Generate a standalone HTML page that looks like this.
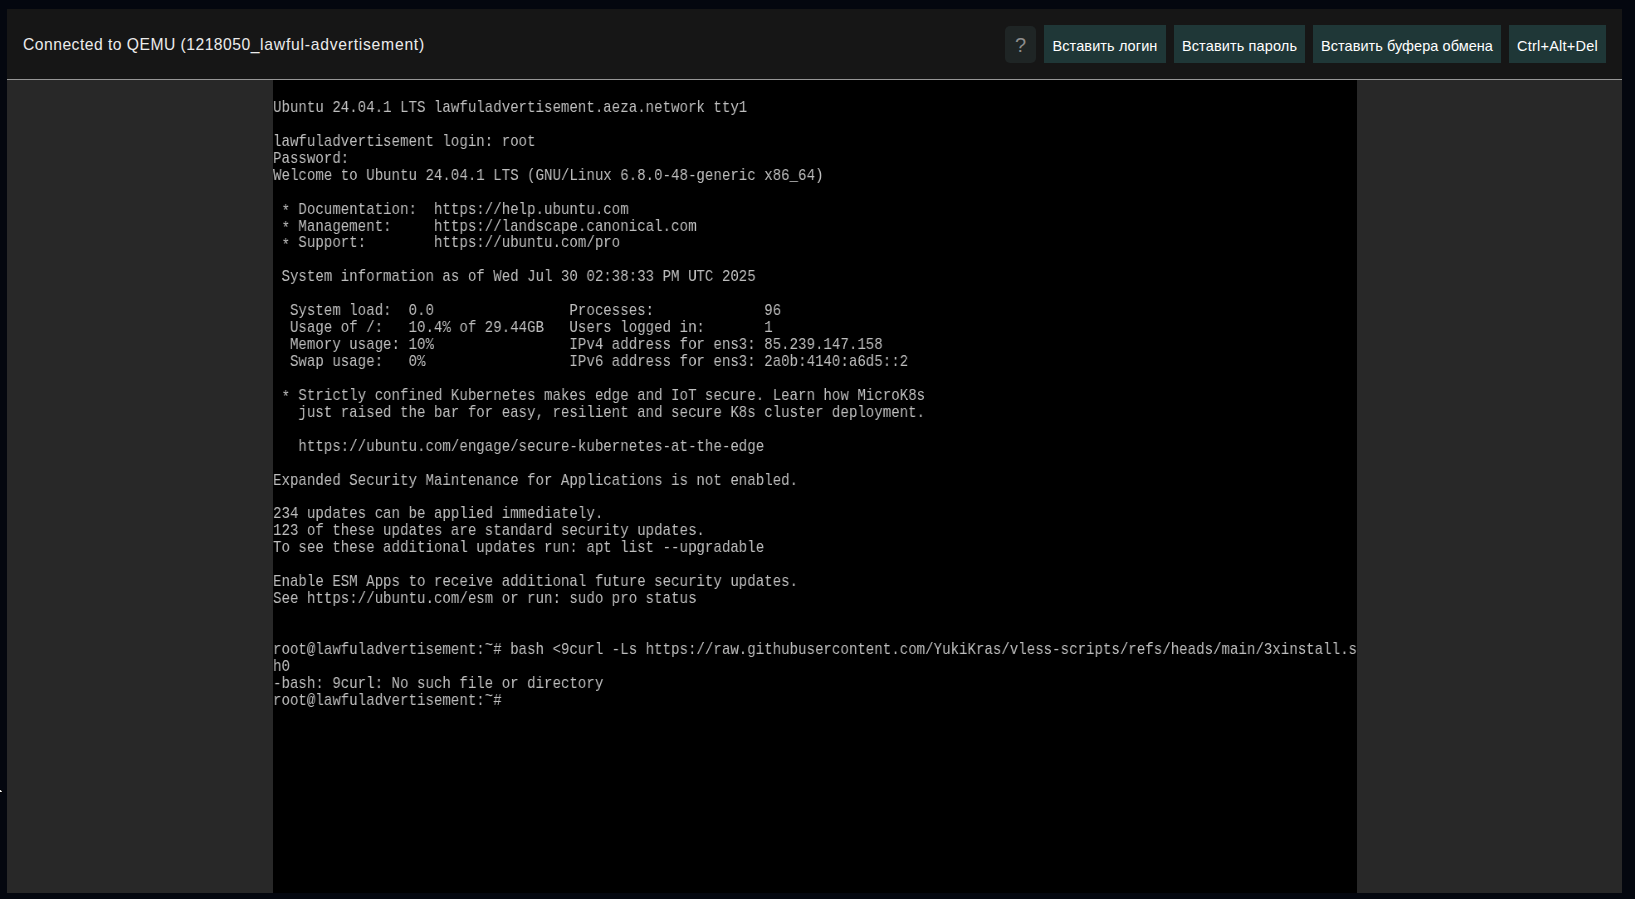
<!DOCTYPE html>
<html lang="ru">
<head>
<meta charset="utf-8">
<title>noVNC - QEMU (1218050_lawful-advertisement)</title>
<style>
  html, body {
    margin: 0;
    padding: 0;
    width: 1635px;
    height: 899px;
    overflow: hidden;
    background: #04070f;
    font-family: "Liberation Sans", sans-serif;
  }
  #frame {
    position: absolute;
    left: 7px;
    top: 9px;
    width: 1615px;
    height: 884px;
    background: #282828;
    overflow: hidden;
  }
  #topbar {
    position: absolute;
    left: 0;
    top: 0;
    width: 1615px;
    height: 70px;
    background: #161616;
    border-bottom: 1px solid #969696;
  }
  #status {
    position: absolute;
    left: 16px;
    top: 26px;
    height: 20px;
    line-height: 20px;
    font-size: 15.7px;
    letter-spacing: 0.6px;
    color: #ececec;
    white-space: nowrap;
  }
  .btn {
    position: absolute;
    top: 16px;
    height: 38px;
    line-height: 38px;
    background: #1f3737;
    color: #ffffff;
    font-size: 14.5px;
    text-align: center;
    white-space: nowrap;
    box-sizing: border-box;
    padding-top: 2px;
  }
  #help {
    position: absolute;
    left: 998px;
    top: 17px;
    width: 31px;
    height: 37px;
    line-height: 38px;
    border-radius: 5px;
    background: #1f2525;
    color: #8d8d8d;
    font-size: 20px;
    text-align: center;
  }
  #screen {
    position: absolute;
    left: 266px;
    top: 71px;
    width: 1084px;
    height: 813px;
    background: #000000;
    overflow: hidden;
  }
  #tty {
    position: absolute;
    left: 0;
    top: 2.7px;
    margin: 0;
    font-family: "Liberation Mono", monospace;
    font-size: 17px;
    line-height: 16.9375px;
    color: #bebebe;
    white-space: pre;
    transform-origin: 0 0;
    transform: scaleX(0.83014);
    will-change: transform;
  }
  #cursor-tip {
    position: absolute;
    left: 0;
    top: 786px;
    width: 6px;
    height: 10px;
  }
  #tty .as { position: relative; top: 2.5px; }
  #tty .ti { position: relative; top: -3.5px; }
</style>
</head>
<body>
<div id="frame">
  <div id="topbar">
    <div id="status"><span style="letter-spacing:0.47px">Connected to QEMU (1218050</span><span style="letter-spacing:0.75px">_lawful-advertisement)</span></div>
    <div id="help">?</div>
    <div class="btn" style="left:1037px;width:122px;letter-spacing:0.10px;">Вставить логин</div>
    <div class="btn" style="left:1167px;width:131px;letter-spacing:0.13px;">Вставить пароль</div>
    <div class="btn" style="left:1306px;width:188px;letter-spacing:0.05px;">Вставить буфера обмена</div>
    <div class="btn" style="left:1502px;width:97px;letter-spacing:0.23px;">Ctrl+Alt+Del</div>
  </div>
  <div id="screen">
<pre id="tty">

Ubuntu 24.04.1 LTS lawfuladvertisement.aeza.network tty1

lawfuladvertisement login: root
Password:
Welcome to Ubuntu 24.04.1 LTS (GNU/Linux 6.8.0-48-generic x86_64)

 <span class="as">*</span> Documentation:  https://help.ubuntu.com
 <span class="as">*</span> Management:     https://landscape.canonical.com
 <span class="as">*</span> Support:        https://ubuntu.com/pro

 System information as of Wed Jul 30 02:38:33 PM UTC 2025

  System load:  0.0                Processes:             96
  Usage of /:   10.4% of 29.44GB   Users logged in:       1
  Memory usage: 10%                IPv4 address for ens3: 85.239.147.158
  Swap usage:   0%                 IPv6 address for ens3: 2a0b:4140:a6d5::2

 <span class="as">*</span> Strictly confined Kubernetes makes edge and IoT secure. Learn how MicroK8s
   just raised the bar for easy, resilient and secure K8s cluster deployment.

   https://ubuntu.com/engage/secure-kubernetes-at-the-edge

Expanded Security Maintenance for Applications is not enabled.

234 updates can be applied immediately.
123 of these updates are standard security updates.
To see these additional updates run: apt list --upgradable

Enable ESM Apps to receive additional future security updates.
See https://ubuntu.com/esm or run: sudo pro status


root@lawfuladvertisement:<span class="ti">~</span># bash &lt;9curl -Ls https://raw.githubusercontent.com/YukiKras/vless-scripts/refs/heads/main/3xinstall.s
h0
-bash: 9curl: No such file or directory
root@lawfuladvertisement:<span class="ti">~</span># </pre>
  </div>
</div>
<svg id="cursor-tip" width="6" height="10" viewBox="0 0 6 10"><path d="M-2 3.9 L0.4 4.0 L1.8 5.3 L1.8 6.1 L-2 6.1 Z" fill="#ffffff" stroke="#000000" stroke-width="1.4" stroke-linejoin="round" paint-order="stroke"/></svg>
</body>
</html>
